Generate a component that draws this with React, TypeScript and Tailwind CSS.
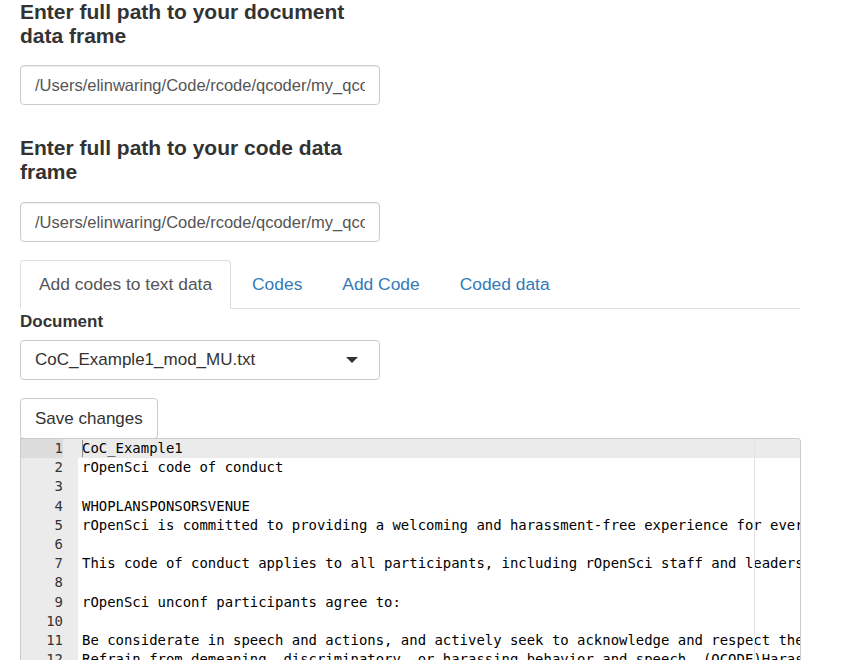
import { useState } from "react";

const lines = [
  "CoC_Example1",
  "rOpenSci code of conduct",
  "",
  "WHOPLANSPONSORSVENUE",
  "rOpenSci is committed to providing a welcoming and harassment-free experience for everyone, regardless of gender.",
  "",
  "This code of conduct applies to all participants, including rOpenSci staff and leadership.",
  "",
  "rOpenSci unconf participants agree to:",
  "",
  "Be considerate in speech and actions, and actively seek to acknowledge and respect the boundaries of others.",
  "Refrain from demeaning, discriminatory, or harassing behavior and speech. (QCODE)Harassment",
];

const tabs = ["Add codes to text data", "Codes", "Add Code", "Coded data"];

export default function App() {
  const [active, setActive] = useState(0);

  return (
    <div className="h-[660px] w-[853px] overflow-hidden bg-white px-5 font-['Liberation_Sans',Arial,sans-serif] text-[#333]">
      <h3 className="w-[360px] text-[21px] font-bold leading-[24px]">
        Enter full path to your document data frame
      </h3>
      <input
        className="mt-[17px] h-[40px] w-[360px] rounded-[4px] border border-[#ccc] px-[14px] text-[16.5px] text-[#555] shadow-[inset_0_1px_1px_rgba(0,0,0,0.075)] outline-none"
        defaultValue="/Users/elinwaring/Code/rcode/qcoder/my_qcoder_project/data_frames/qcoder_documents_my_qcoder_project.rds"
      />

      <h3 className="mt-[31px] w-[360px] text-[21px] font-bold leading-[24px]">
        Enter full path to your code data frame
      </h3>
      <input
        className="mt-[18px] h-[40px] w-[360px] rounded-[4px] border border-[#ccc] px-[14px] text-[16.5px] text-[#555] shadow-[inset_0_1px_1px_rgba(0,0,0,0.075)] outline-none"
        defaultValue="/Users/elinwaring/Code/rcode/qcoder/my_qcoder_project/data_frames/qcoder_codes_my_qcoder_project.rds"
      />

      {/* tabs */}
      <div className="mt-[18px] flex w-[780px] border-b border-[#ddd]">
        {tabs.map((t, i) => (
          <button
            key={t}
            onClick={() => setActive(i)}
            className={
              i === active
                ? "-mb-px mr-[2px] h-[49px] rounded-t-[4px] border border-[#ddd] border-b-white bg-white px-[18px] text-[17.4px] text-[#555]"
                : "mr-[2px] h-[48px] border border-transparent px-[18px] text-[17.4px] text-[#337ab7]"
            }
          >
            {t}
          </button>
        ))}
      </div>

      <div className="mt-[3px] text-[17px] font-bold leading-[20px]">Document</div>
      <div className="mt-[8px] flex h-[40px] w-[360px] items-center justify-between rounded-[4px] border border-[#ccc] pl-[14px] pr-[21px] text-[17px] text-[#333]">
        <span>CoC_Example1_mod_MU.txt</span>
        <span className="h-0 w-0 border-x-[6px] border-t-[6px] border-x-transparent border-t-[#333]" />
      </div>

      <button className="mt-[18px] block h-[41px] w-[138px] rounded-[4px] border border-[#ccc] bg-white pl-[14px] text-left text-[17px] text-[#333]">
        Save changes
      </button>

      {/* editor */}
      <div className="-mt-[1px] h-[240px] w-[781px] overflow-hidden rounded-tr-[4px] border-l border-r border-t border-[#ccc] bg-white font-['DejaVu_Sans_Mono',monospace] text-[13.95px] leading-[19.2px] text-black">
        <div className="relative flex">
          <div className="w-[57px] shrink-0 bg-[#ebebeb] pr-[15px] text-right text-[#333]">
            {lines.map((_, i) => (
              <div key={i} className={i === 0 ? "bg-[#dcdcdc]" : ""}>
                {i + 1}
              </div>
            ))}
          </div>
          <div className="relative min-w-0 flex-1">
            {lines.map((l, i) => (
              <div
                key={i}
                className={
                  i === 0
                    ? "relative whitespace-pre bg-[#ebebeb] pl-[4px]"
                    : "whitespace-pre pl-[4px]"
                }
              >
                {i === 0 && <span className="absolute left-[4px] top-[1px] h-[17px] w-px bg-[#888]" />}
                {l || " "}
              </div>
            ))}
            <div className="absolute left-[676px] top-0 z-10 h-full w-px bg-[#e3e3e3]" />
          </div>
        </div>
      </div>
    </div>
  );
}
